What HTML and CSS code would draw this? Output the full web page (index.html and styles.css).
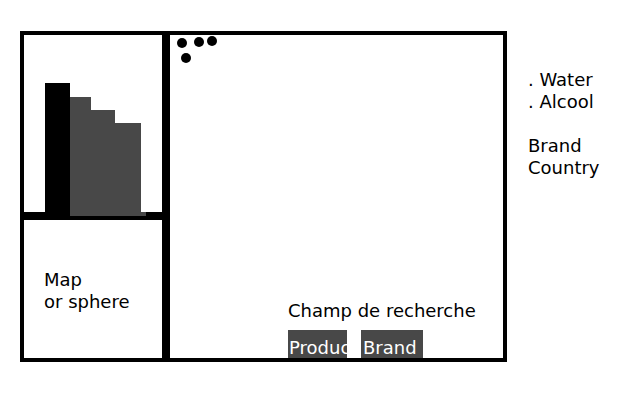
FILE: index.html
```html
<!DOCTYPE html>
<html lang="en">
<head>
    <meta charset="UTF-8">
    <meta name="viewport" content="width=device-width, initial-scale=1.0">
    <title>Wireframe</title>
    <link rel="stylesheet" href="styles.css">
</head>
<body>
    <div class="page">
        <div class="left">
            <div class="box chart-box">
                <div class="bar black" style="height: 133px; width: 25px;"></div>
                <div class="bar" style="height: 119px; width: 21px;"></div>
                <div class="bar" style="height: 106px; width: 24px;"></div>
                <div class="bar last" style="height: 93px; width: 26px;"></div>
            </div>
            <div class="box map-box">Map<br>or sphere</div>
        </div>

        <div class="box main">
            <div class="dots">
                <span class="dot d1"></span>
                <span class="dot d2"></span>
                <span class="dot d3"></span>
                <span class="dot d4"></span>
            </div>
            <div class="search">
                <div class="search-label">Champ de recherche</div>
                <div class="tabs">
                    <div class="tab product">Product</div>
                    <div class="tab brand">Brand</div>
                </div>
            </div>
        </div>

        <div class="side">
            . Water<br>
            . Alcool<br>
            <br>
            Brand<br>
            Country
        </div>
    </div>
</body>
</html>
```

FILE: styles.css
```css
* {
    margin: 0;
    padding: 0;
    box-sizing: border-box;
}

body {
    background: #fff;
    color: #000;
    font-family: "DejaVu Sans", sans-serif;
    font-size: 18px;
    line-height: 22px;
}

.page {
    display: flex;
    padding: 31px 0 0 20px;
}

.left {
    width: 146px;
    display: flex;
    flex-direction: column;
}

.box {
    border: 4px solid #000;
}

.chart-box {
    height: 185px;
    display: flex;
    align-items: flex-end;
    padding-left: 21px;
}

.bar {
    background: #484848;
    margin-bottom: -4px;
    position: relative;
}

.bar.black {
    background: #000;
}

/* sketchy overhang of the last bar */
.bar.last::after {
    content: "";
    position: absolute;
    right: -5px;
    bottom: 0;
    width: 5px;
    height: 4px;
    background: #484848;
}

.map-box {
    height: 146px;
    padding: 49px 0 0 20px;
}

.main {
    width: 341px;
    height: 331px;
    position: relative;
    display: flex;
    flex-direction: column;
    justify-content: flex-end;
}

.dots {
    position: absolute;
    top: 0;
    left: 0;
}

.dot {
    position: absolute;
    width: 10px;
    height: 10px;
    border-radius: 50%;
    background: #000;
}

.d1 { left: 7px; top: 3px; }
.d2 { left: 24px; top: 2px; }
.d3 { left: 37px; top: 1px; }
.d4 { left: 11px; top: 18px; }

.search {
    padding-left: 118px;
}

.search-label {
    margin-bottom: 8px;
}

.tabs {
    display: flex;
    gap: 14px;
}

.tab {
    background: #484848;
    color: #fff;
    height: 28px;
    padding: 8px 0 0 1px;
    line-height: 20px;
    white-space: nowrap;
    overflow: hidden;
}

.product {
    width: 59px;
}

.brand {
    width: 62px;
    padding-left: 2px;
}

.side {
    padding: 38px 0 0 21px;
}
```
